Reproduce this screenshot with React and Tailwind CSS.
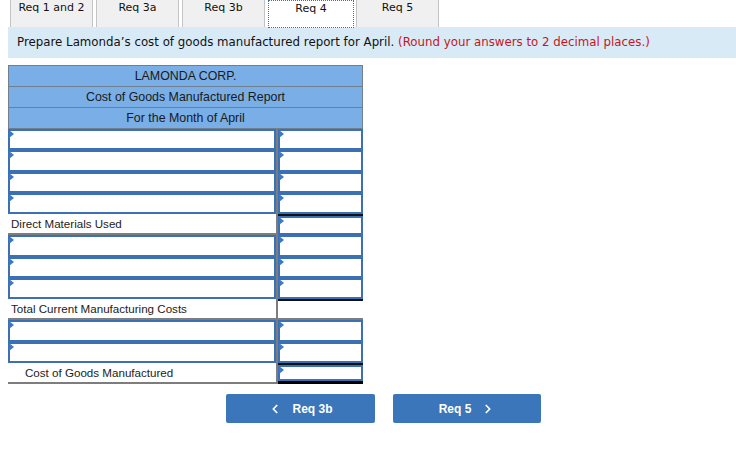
import React from "react";
import { ChevronLeft, ChevronRight } from "lucide-react";

const tabs = ["Req 1 and 2", "Req 3a", "Req 3b", "Req 4", "Req 5"];

// each row of the report body
const rows = [
  { type: "input" },
  { type: "input" },
  { type: "input" },
  { type: "input" },
  { type: "label", text: "Direct Materials Used", right: "input", topLine: true },
  { type: "input" },
  { type: "input" },
  { type: "input" },
  { type: "label", text: "Total Current Manufacturing Costs", right: "blank", topLine: true },
  { type: "input" },
  { type: "input" },
  { type: "label", text: "Cost of Goods Manufactured", right: "input", topLine: true, indent: true, total: true },
];

function InputBox() {
  return (
    <div className="relative h-full w-full border-2 border-[#3b70b4] bg-white">
      <span className="absolute -left-[1px] -top-[1px] h-0 w-0 border-y-[4px] border-l-[5px] border-y-transparent border-l-[#3b78c8]" />
    </div>
  );
}

function Row({ row }) {
  const left =
    row.type === "input" ? (
      <InputBox />
    ) : (
      <div
        className={
          "flex h-full items-center border-b-2 border-[#7d7d7d] text-[11.6px] text-[#222] " +
          (row.indent ? "pl-[17px]" : "pl-[3px]")
        }
      >
        {row.text}
      </div>
    );

  let right;
  if (row.type === "input" || row.right === "input") {
    right = (
      <div
        className={
          "h-full " +
          (row.topLine ? "border-t-2 border-[#111] " : "") +
          (row.total ? "border-b-[3px] border-b-black" : "")
        }
      >
        <InputBox />
      </div>
    );
  } else {
    right = <div className="h-full border-t-2 border-b-2 border-t-[#111] border-b-[#7d7d7d] bg-white" />;
  }

  return (
    <div className="flex h-[21.25px]">
      <div className="w-[270px] border-r-2 border-[#7d7d7d]">{left}</div>
      <div className="w-[85px]">{right}</div>
    </div>
  );
}

export default function App() {
  return (
    <div className="h-[473px] w-[736px] bg-white font-['Liberation_Sans',Arial,sans-serif]">
      {/* tabs */}
      <div className="flex h-[27px] pl-[10px] font-['DejaVu_Sans',Verdana,sans-serif] text-[11px] text-[#111]">
        {tabs.map((t) =>
          t === "Req 4" ? (
            <div
              key={t}
              className="relative z-10 mr-[2px] flex h-[28px] w-[86px] justify-center border border-dotted border-[#3a6fb0] bg-white"
            >
              {t}
            </div>
          ) : (
            <div
              key={t}
              className="mr-[3px] flex h-[27px] w-[83px] justify-center border-x border-[#c4c4c4] bg-[#f0f0f0]"
            >
              {t}
            </div>
          )
        )}
      </div>

      {/* instruction bar */}
      <div className="ml-[8px] flex h-[31px] items-center bg-[#d9eaf7] pl-[9px] font-['DejaVu_Sans',Verdana,sans-serif] text-[11.8px] text-[#111]">
        <span>
          Prepare Lamonda’s cost of goods manufactured report for April.{" "}
          <span className="text-[#c4161c]">(Round your answers to 2 decimal places.)</span>
        </span>
      </div>

      {/* report */}
      <div className="ml-[8px] mt-[7px] w-[355px]">
        <div className="border border-[#6f7f90] bg-[#79aee6] text-center text-[12.4px] font-medium text-[#1a1a1a]">
          <div className="flex h-[21px] items-center justify-center border-b border-[#6f7f90]">LAMONDA CORP.</div>
          <div className="flex h-[21px] items-center justify-center border-b border-[#6f7f90]">
            Cost of Goods Manufactured Report
          </div>
          <div className="flex h-[20px] items-center justify-center">For the Month of April</div>
        </div>
        <div>
          {rows.map((r, i) => (
            <Row key={i} row={r} />
          ))}
        </div>
      </div>

      {/* navigation */}
      <div className="ml-[226px] mt-[10px] flex gap-[18px]">
        <button className="flex h-[29px] w-[149px] items-center justify-center gap-[10px] rounded-[2px] bg-[#3a76b9] text-[12px] font-bold text-white">
          <ChevronLeft size={14} strokeWidth={3} />
          Req 3b
        </button>
        <button className="flex h-[29px] w-[148px] items-center justify-center gap-[10px] rounded-[2px] bg-[#3a76b9] text-[12px] font-bold text-white">
          Req 5
          <ChevronRight size={14} strokeWidth={3} />
        </button>
      </div>
    </div>
  );
}
